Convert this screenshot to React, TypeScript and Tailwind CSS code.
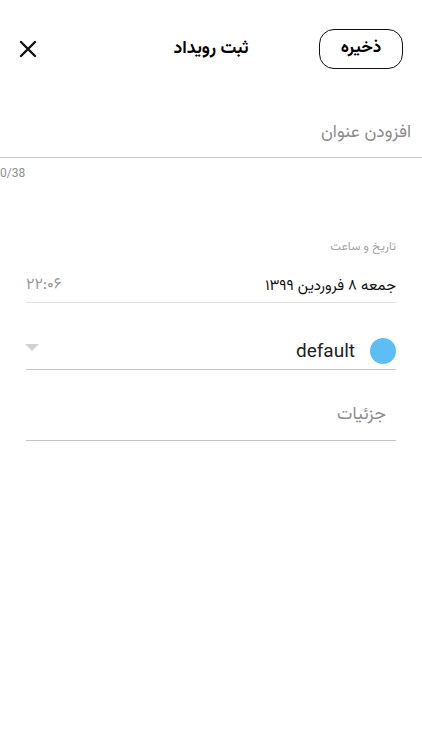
import React from 'react';

const fa = { fontFamily: '"Vazirmatn", "Noto Sans Arabic", "DejaVu Sans", sans-serif' };
const latin = { fontFamily: 'Roboto, "Noto Sans", sans-serif' };

function CloseIcon() {
  return (
    <svg width="18" height="18" viewBox="0 0 18 18" fill="none" stroke="#111" strokeWidth="2.4" strokeLinecap="round">
      <path d="M2 2L16 16M16 2L2 16" />
    </svg>
  );
}

export default function App() {
  return (
    <div className="w-[422px] min-h-[750px] bg-white text-[#1a1a1a]">
      {/* header */}
      <div className="grid grid-cols-[1fr_auto_1fr] items-center pt-[29px] pl-[19px] pr-[19px]" dir="ltr">
        <div className="flex justify-start">
          <button className="w-[38px] h-[40px] flex items-center justify-start">
            <CloseIcon />
          </button>
        </div>
        <h1 className="text-[17.5px] font-bold text-black" style={fa} dir="rtl">ثبت رویداد</h1>
        <div className="flex justify-end">
          <button
            className="w-[84px] h-[40px] rounded-[15px] border-[1.5px] border-[#111] text-[17px] font-bold text-black flex items-center justify-center"
            style={fa}
          >
            ذخیره
          </button>
        </div>
      </div>

      {/* title input */}
      <div className="mt-[48px]" dir="rtl">
        <div className="pr-[11px] pt-[3px] h-[41px] flex items-start border-b-[1.5px] border-[#c9c9c9]">
          <span className="text-[17.5px] text-[#8d8d8d] leading-[26px]" style={fa}>افزودن عنوان</span>
        </div>
        <div dir="ltr" className="pt-[8px] text-[12px] text-[#8f8f8f] leading-[15px]" style={latin}>0/38</div>
      </div>

      <div className="px-[26px] mt-[58px]" dir="rtl">
        {/* date & time */}
        <div className="text-[12px] text-[#a3a3a3] leading-[16px]" style={fa}>تاریخ و ساعت</div>
        <div className="mt-[17px] h-[31px] flex items-end justify-between border-b-[1.5px] border-[#e2e2e2] pb-[4px]">
          <span className="text-[15px] text-[#111] leading-[22px]" style={fa}>جمعه ۸ فروردین ۱۳۹۹</span>
          <span className="text-[16px] text-[#9a9a9a] leading-[22px] mb-[1px]" style={fa}>۲۲:۰۶</span>
        </div>

        {/* category select */}
        <div className="mt-[37px] h-[30px] flex items-center justify-between border-b-[1.5px] border-[#c4c4c4] pb-[8px]">
          <div className="flex items-center gap-[15px]">
            <span className="w-[26px] h-[26px] rounded-full bg-[#5dbdf4]" />
            <span className="text-[19px] text-[#222] leading-[22px]" style={latin} dir="ltr">default</span>
          </div>
          <svg width="14" height="7" viewBox="0 0 14 7" className="ml-[-1px] mb-[7px]">
            <path d="M0 0H14L7 7Z" fill="#d2d2d2" />
          </svg>
        </div>

        {/* details */}
        <div className="mt-[30px] h-[41px] pr-[10px] pt-[2px] flex items-start border-b-[1.5px] border-[#c4c4c4]">
          <span className="text-[17.5px] text-[#8d8d8d] leading-[26px]" style={fa}>جزئیات</span>
        </div>
      </div>
    </div>
  );
}
